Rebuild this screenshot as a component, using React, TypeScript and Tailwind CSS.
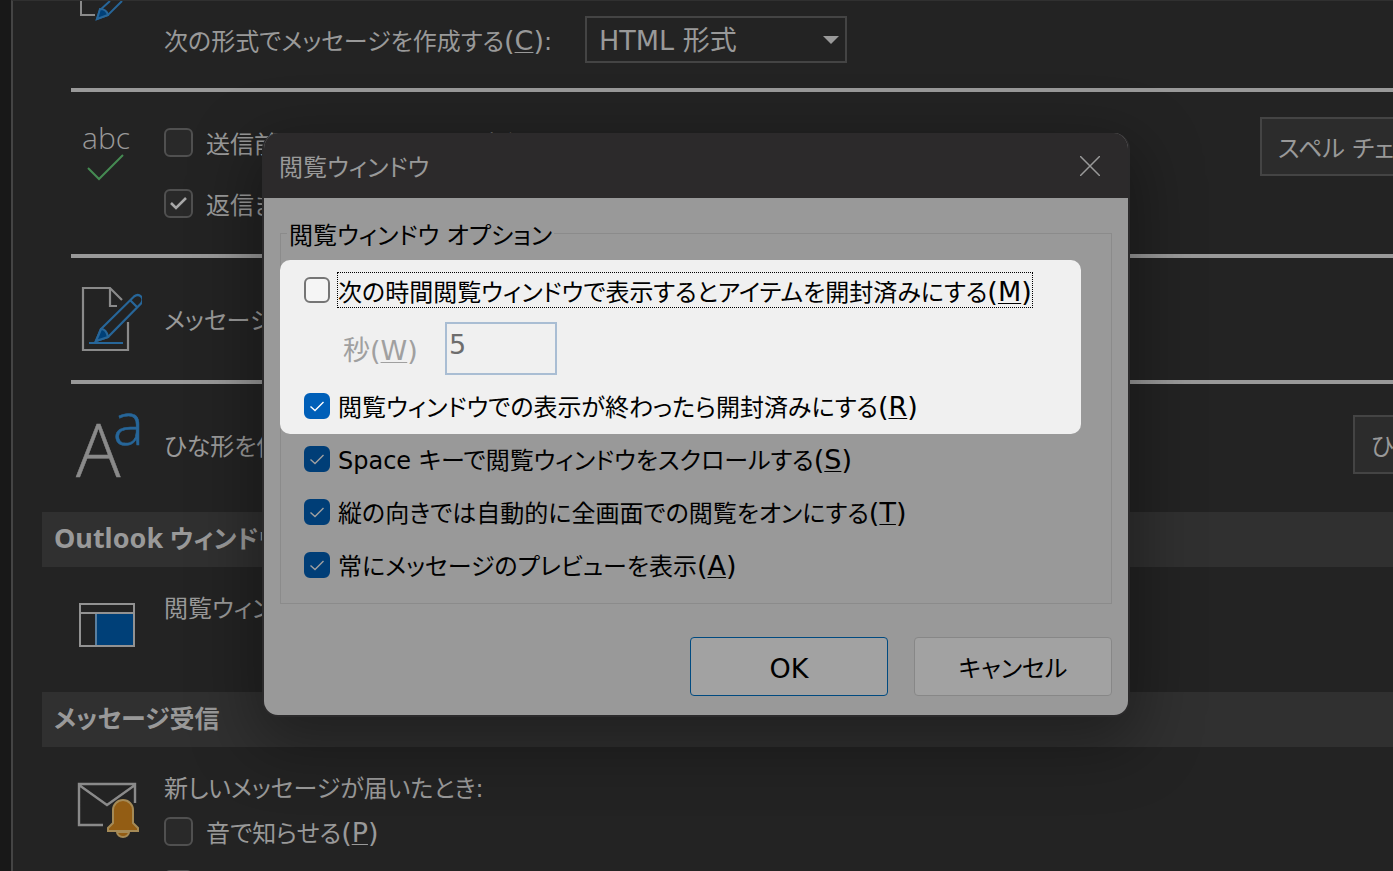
import { useState } from 'react'
import type { ReactNode } from 'react'
import clsx from 'clsx'

/**
 * Access key shown at the end of a label, e.g. (M)
 */
function AccessKey({ char }: { char: string }) {
  return (
    <span className="text-[27px]">
      (<span className="underline decoration-1 underline-offset-2">{char}</span>)
    </span>
  )
}

interface CheckOptionProps {
  id: string
  label: string
  accessKey?: string
  defaultChecked?: boolean
  focused?: boolean
  /** Row is inside the spotlight area */
  bright?: boolean
}

/**
 * Checkbox row used in the dialog
 */
function CheckOption({ id, label, accessKey, defaultChecked = false, focused = false, bright = false }: CheckOptionProps) {
  const [checked, setChecked] = useState(defaultChecked)

  return (
    <div className={clsx('flex items-center gap-[7px]', focused ? 'h-9' : 'h-[53px] pb-1')}>
      <span className="grid shrink-0">
        <input
          id={id}
          type="checkbox"
          checked={checked}
          onChange={(e) => setChecked(e.target.checked)}
          className={clsx(
            'col-start-1 row-start-1 size-[26px] appearance-none rounded-md border-2',
            !checked && 'border-[#757575] bg-[#f5f5f5]',
            checked && bright && 'border-[#005fb8] bg-[#005fb8]',
            checked && !bright && 'border-[#003e77] bg-[#003e77]'
          )}
        />
        {checked && (
          <svg
            viewBox="0 0 26 26"
            className={clsx(
              'pointer-events-none col-start-1 row-start-1 size-[26px]',
              bright ? 'stroke-white' : 'stroke-[#a0a0a0]'
            )}
            fill="none"
            strokeWidth="1.4"
          >
            <path d="M6.5 13.5l4.5 4 8.5-8.5" />
          </svg>
        )}
      </span>
      <label
        htmlFor={id}
        className={clsx(
          'flex h-9 items-center whitespace-nowrap border pt-1 text-black',
          focused ? 'border-dotted border-black' : 'border-transparent'
        )}
      >
        <span>
          {label}
          {accessKey && <AccessKey char={accessKey} />}
        </span>
      </label>
    </div>
  )
}

/**
 * Checkbox row used on the dark options page
 */
function PageCheck({ id, label, accessKey, defaultChecked = false }: CheckOptionProps) {
  const [checked, setChecked] = useState(defaultChecked)

  return (
    <div className="flex h-[29px] items-center gap-[13px]">
      <span className="grid shrink-0">
        <input
          id={id}
          type="checkbox"
          checked={checked}
          onChange={(e) => setChecked(e.target.checked)}
          className="col-start-1 row-start-1 size-[29px] appearance-none rounded-md border-2 border-[#505050] bg-[#292929]"
        />
        {checked && (
          <svg
            viewBox="0 0 29 29"
            className="pointer-events-none col-start-1 row-start-1 size-[29px] stroke-[#a8a8a8]"
            fill="none"
            strokeWidth="2.6"
          >
            <path d="M7 14l5 5 10-10" />
          </svg>
        )}
      </span>
      <label htmlFor={id} className="whitespace-nowrap pt-1">
        {label}
        {accessKey && <AccessKey char={accessKey} />}
      </label>
    </div>
  )
}

function Row({ icon, className, children }: { icon: ReactNode; className: string; children: ReactNode }) {
  return (
    <div className={clsx('flex items-start pl-[57px]', className)}>
      <div className="w-[94px] shrink-0">{icon}</div>
      {children}
    </div>
  )
}

function Divider() {
  return <hr className="ml-[58px] h-1 border-0 bg-[#999999]" />
}

function SectionTitle({ children }: { children: ReactNode }) {
  return (
    <h2 className="ml-[29px] h-[55px] bg-[#303030] pl-3 pt-2 font-['Noto_Sans','Noto_Sans_CJK_JP',sans-serif] text-[25px] font-bold">
      {children}
    </h2>
  )
}

function PageButton({ className, children }: { className: string; children: ReactNode }) {
  return (
    <button
      type="button"
      className={clsx(
        'ml-auto h-[59px] shrink-0 overflow-hidden whitespace-nowrap border-2 border-[#444444] bg-[#2c2c2c] pl-4 pt-1 text-left',
        className
      )}
    >
      {children}
    </button>
  )
}

/* ---------- Icons ---------- */

function PencilPage() {
  return (
    <svg viewBox="0 0 72 72" className="size-[72px]" fill="none" strokeWidth="2.2">
      <path d="M58 42v28H13V8h27l12 12M40 8v18h7" stroke="#8a8a8a" />
      <path d="M31 49L64 16.500q4-3 7 0t0 7L38 57l-12 4z" stroke="#276699" fill="#232323" />
      <path d="M26 61l5-12c4 0 6 3 7 8z" fill="#004078" stroke="#276699" />
      <path d="M60 20l7 7M19 63h34" stroke="#276699" />
    </svg>
  )
}

function SpellCheck() {
  return (
    <svg viewBox="0 0 72 72" className="size-[72px]">
      <text x="12" y="32" fontSize="30" fontWeight="300" fill="#999999" fontFamily="'Open Sans', 'Noto Sans', sans-serif">
        abc
      </text>
      <path d="M18 51l11 11 24-24" fill="none" stroke="#458a52" strokeWidth="2" />
    </svg>
  )
}

function FontLetters() {
  return (
    <svg
      viewBox="0 0 80 72"
      className="h-[72px] w-20 overflow-visible"
      fontFamily="'Open Sans', 'Noto Sans', sans-serif"
      fontWeight="300"
    >
      <text x="6" y="62" fontSize="74" fill="#8a8a8a" stroke="#8a8a8a" strokeWidth="0.5">
        A
      </text>
      <text x="43" y="30" fontSize="58" fill="#276699" stroke="#276699" strokeWidth="0.5">
        a
      </text>
    </svg>
  )
}

function ReadingPane() {
  return (
    <svg viewBox="0 0 72 60" className="h-[60px] w-[72px]" fill="none">
      <path d="M26 18h38v33H26z" fill="#004078" />
      <path d="M26 18v33" stroke="#5a7f9f" strokeWidth="2" />
      <path d="M10 9h54v42H10zM10 18h54" stroke="#929292" strokeWidth="2" />
    </svg>
  )
}

function MailBell() {
  return (
    <svg viewBox="0 0 72 68" className="h-[68px] w-[72px] overflow-visible" fill="none">
      <path d="M33 50H9V9h56v19M9 10l28 20 28-20" stroke="#8a8a8a" strokeWidth="2.4" />
      <path d="M39 50V36a15 15 0 0 1 28 0v14z" fill="#232323" />
      <path d="M47 57a6 5 0 0 0 12 0z" fill="#935d14" stroke="#a58a56" strokeWidth="2" />
      <path
        d="M38 56v-3l5-5V35a10 10 0 0 1 20 0v13l5 5v3z"
        fill="#935d14"
        stroke="#a58a56"
        strokeWidth="2"
      />
    </svg>
  )
}

/**
 * Mail options page behind the dialog
 */
function OptionsPage() {
  return (
    <main className="min-h-screen border-l-2 border-t border-l-[#444444] border-t-[#303030] bg-[#232323] text-[#999999]">
      <Row
        className="h-[87px]"
        icon={
          <svg viewBox="0 0 72 24" className="h-6 w-[72px]" fill="none" strokeWidth="2">
            <path d="M11 0v14h14" stroke="#8a8a8a" />
            <path d="M40 0L30 9l-3 9 11-4L52 0" stroke="#276699" />
            <path d="M27 18l3-10c5 0 7 2 8 6z" fill="#004078" stroke="#276699" />
          </svg>
        }
      >
        <div className="flex items-center pt-[15px]">
          <label htmlFor="format" className="w-[421px] whitespace-nowrap pt-1">
            次の形式でメッセージを作成する
            <AccessKey char="C" />:
          </label>
          <span className="grid items-center">
            <select
              id="format"
              className="col-start-1 row-start-1 h-[47px] w-[262px] appearance-none border-2 border-[#444444] bg-[#232323] pl-3 pt-0.5 text-[27px]"
            >
              <option>HTML 形式</option>
              <option>リッチ テキスト形式</option>
              <option>テキスト形式</option>
            </select>
            <svg viewBox="0 0 16 8" className="pointer-events-none col-start-1 row-start-1 mr-2 h-2 w-4 justify-self-end fill-[#999999]">
              <path d="M0 0h16l-8 8z" />
            </svg>
          </span>
        </div>
      </Row>
      <Divider />

      <Row className="h-[162px] pt-[25px]" icon={<SpellCheck />}>
        <div className="flex flex-col gap-8 pt-[11px]">
          <PageCheck id="spell-send" label="送信前にスペル チェックを実行する" />
          <PageCheck id="spell-reply" label="返信または転送するメッセージの元の部分は除く" defaultChecked />
        </div>
        <PageButton className="-mr-[127px] w-[260px]">スペル チェック...</PageButton>
      </Row>
      <Divider />

      <Row className="h-[122px] pt-[22px]" icon={<PencilPage />}>
        <p className="pt-[23px]">メッセージの署名を作成または変更します。</p>
      </Row>
      <Divider />

      <Row className="h-[128px] pt-[31px]" icon={<FontLetters />}>
        <p className="pt-[14px]">ひな形を使用して、既定のフォントを変更します。</p>
        <PageButton className="-mr-[220px] w-[260px]">ひな形およびフォント...</PageButton>
      </Row>

      <SectionTitle>
        <span className="text-[27px]">Outlook</span> ウィンドウ
      </SectionTitle>
      <Row className="h-[125px] pt-6" icon={<div className="pt-1"><ReadingPane /></div>}>
        <p>閲覧ウィンドウでアイテムを開封済みにする方法を指定します。</p>
      </Row>

      <SectionTitle>メッセージ受信</SectionTitle>
      <Row className="pt-6" icon={<div className="pt-1"><MailBell /></div>}>
        <div className="flex flex-col gap-2.5">
          <p>新しいメッセージが届いたとき:</p>
          <div className="flex flex-col gap-6">
            <PageCheck id="play-sound" label="音で知らせる" accessKey="P" />
            <PageCheck id="change-cursor" label="マウス ポインターの形を変える" />
          </div>
        </div>
      </Row>
    </main>
  )
}

/**
 * Reading pane dialog with the highlighted "mark as read" options
 */
function ReadingPaneDialog() {
  return (
    <div className="absolute inset-0 flex items-start justify-center pr-px pt-[133px]">
      <div
        role="dialog"
        aria-labelledby="dialog-title"
        className="w-[868px] overflow-hidden rounded-2xl border-2 border-t-0 border-[#2b2a2b] bg-[#999999] shadow-[0_20px_64px_8px_rgba(0,0,0,0.35)]"
      >
        <header className="flex h-[65px] items-center justify-between bg-[#2c2a2b] pl-[15px] pr-6 text-[#999999]">
          <h1 id="dialog-title" className="pt-1">閲覧ウィンドウ</h1>
          <button type="button" aria-label="閉じる" className="p-1">
            <svg viewBox="0 0 20 20" className="size-5" fill="none" stroke="currentColor" strokeWidth="1.5">
              <path d="M0 0l20 20M20 0L0 20" />
            </svg>
          </button>
        </header>

        <form className="px-4 pb-[19px] pt-4" onSubmit={(e) => e.preventDefault()}>
          <fieldset className="min-w-0 border border-[#8b8b8b] pb-2.5">
            <legend className="ml-1.5 h-[38px] px-0.5 pt-1 leading-9 text-black">閲覧ウィンドウ オプション</legend>

            <div className="-ml-px mr-[30px] mt-2 rounded-[10px] bg-[#f0f0f0] pl-6 pt-3">
              <CheckOption
                id="mark-timed"
                label="次の時間閲覧ウィンドウで表示するとアイテムを開封済みにする"
                accessKey="M"
                focused
                bright
              />
              <div className="mb-1.5 mt-3.5 flex items-center pl-[39px]">
                <label htmlFor="seconds" className="w-[102px] pt-1 text-[27px] text-[#a0a0a0]">
                  秒
                  <AccessKey char="W" />
                </label>
                <input
                  id="seconds"
                  type="text"
                  defaultValue="5"
                  disabled
                  className="h-[53px] w-28 border-2 border-[#a9bdd3] bg-[#f0f0f0] pb-2 pl-0.5 text-[27px] text-[#6d6d6d]"
                />
              </div>
              <CheckOption
                id="mark-change"
                label="閲覧ウィンドウでの表示が終わったら開封済みにする"
                accessKey="R"
                defaultChecked
                bright
              />
            </div>

            <div className="pl-[23px]">
              <CheckOption
                id="space-scroll"
                label="Space キーで閲覧ウィンドウをスクロールする"
                accessKey="S"
                defaultChecked
              />
              <CheckOption
                id="portrait"
                label="縦の向きでは自動的に全画面での閲覧をオンにする"
                accessKey="T"
                defaultChecked
              />
              <CheckOption id="preview" label="常にメッセージのプレビューを表示" accessKey="A" defaultChecked />
            </div>
          </fieldset>

          <div className="mt-[33px] flex justify-end gap-[26px] text-black">
            <button type="submit" className="h-[59px] w-[198px] rounded border border-[#004a80] bg-[#a2a2a2] pt-1 text-[27px]">
              OK
            </button>
            <button type="button" className="h-[59px] w-[198px] rounded border border-[#878787] bg-[#a2a2a2] pt-1">
              キャンセル
            </button>
          </div>
        </form>
      </div>
    </div>
  )
}

export default function App() {
  return (
    <div className="relative h-screen overflow-hidden bg-[#181818] pl-[11px] font-['DejaVu_Sans','Noto_Sans_CJK_JP',sans-serif] text-2xl leading-9 [font-feature-settings:'palt']">
      <OptionsPage />
      <ReadingPaneDialog />
    </div>
  )
}
